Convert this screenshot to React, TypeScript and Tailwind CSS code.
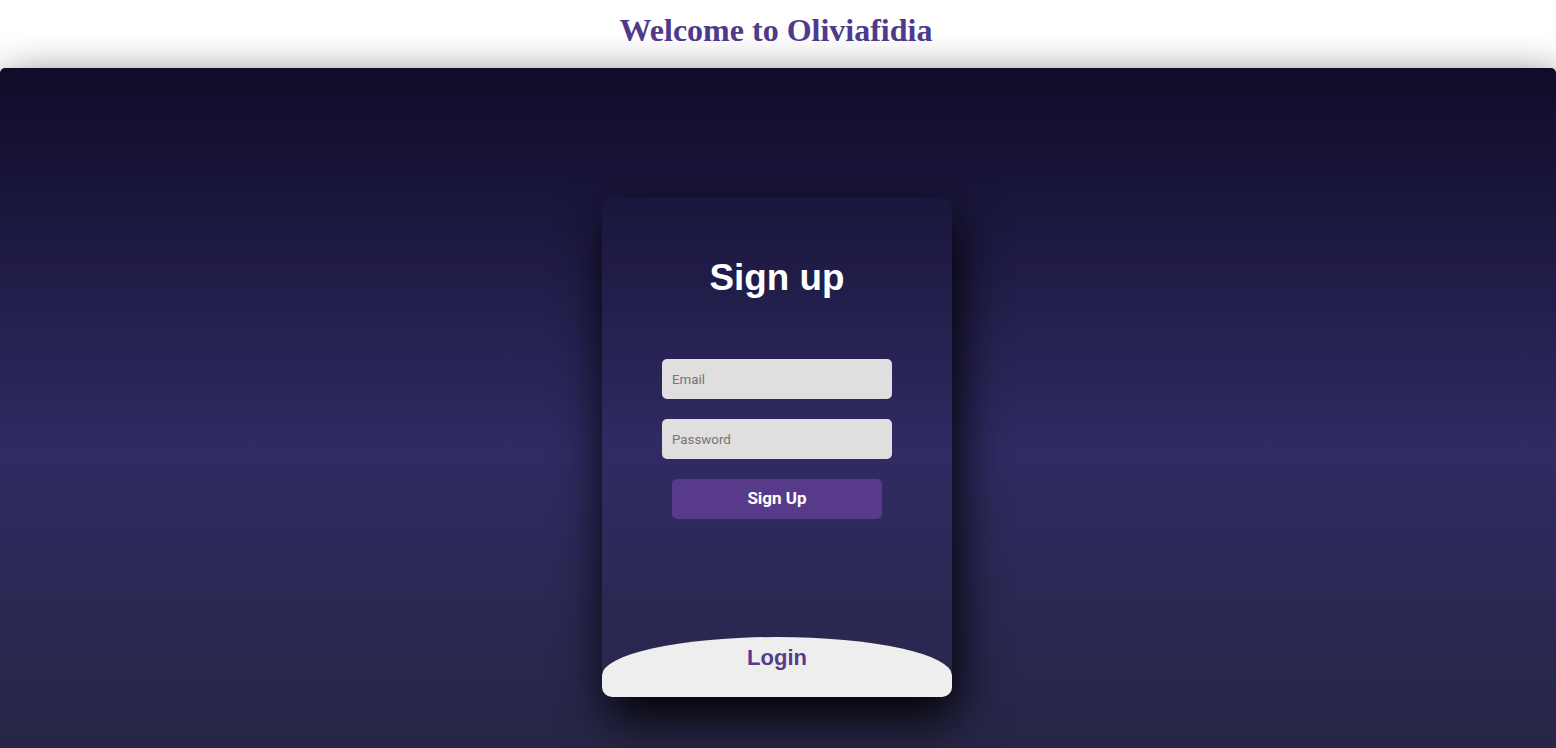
import React from "react";

export default function App() {
  return (
    <div className="h-[748px] w-full overflow-hidden bg-white">
      <header className="h-[68px] pr-[4px] pt-[6px] text-center">
        <h1
          className="text-[32px] font-bold leading-normal text-[#4e3a8a]"
          style={{ fontFamily: '"Liberation Serif", "Times New Roman", serif' }}
        >
          Welcome to Oliviafidia
        </h1>
      </header>
      <main className="flex h-[764px] w-full justify-center rounded-[5px] bg-gradient-to-b from-[#0f0c29] via-[#302b63] to-[#24243e] pr-[2px] pt-[129px] shadow-[5px_20px_50px_#000]">
        <div className="relative h-[500px] w-[350px] overflow-hidden rounded-[10px] shadow-[5px_20px_50px_#000]">
          <div className="flex w-full flex-col items-center pt-[53px]">
            <div
              className="text-[36.8px] font-bold leading-normal text-white"
              style={{ fontFamily: '"Liberation Sans", Arial, sans-serif' }}
            >
              Sign up
            </div>
            <input
              type="email"
              placeholder="Email"
              className="mt-[54px] h-[40px] w-[230px] rounded-[5px] bg-[#e0dede] px-[10px] text-[13.333px] text-black outline-none placeholder:text-[#757575]"
              style={{ fontFamily: "Roboto, sans-serif" }}
            />
            <input
              type="password"
              placeholder="Password"
              className="mt-[20px] h-[40px] w-[230px] rounded-[5px] bg-[#e0dede] px-[10px] text-[13.333px] text-black outline-none placeholder:text-[#757575]"
              style={{ fontFamily: "Roboto, sans-serif" }}
            />
            <button
              className="mt-[20px] h-[40px] w-[210px] rounded-[5px] bg-[#573b8a] text-[17px] font-bold text-white"
              style={{ fontFamily: "Roboto, sans-serif" }}
            >
              Sign Up
            </button>
          </div>
          <div className="absolute left-0 top-[440px] h-[460px] w-full rounded-[60%/10%] bg-[#eeeeee] pt-[4px]">
            <div
              className="text-center text-[22px] font-bold leading-normal text-[#573b8a]"
              style={{ fontFamily: '"Liberation Sans", Arial, sans-serif' }}
            >
              Login
            </div>
          </div>
        </div>
      </main>
    </div>
  );
}
